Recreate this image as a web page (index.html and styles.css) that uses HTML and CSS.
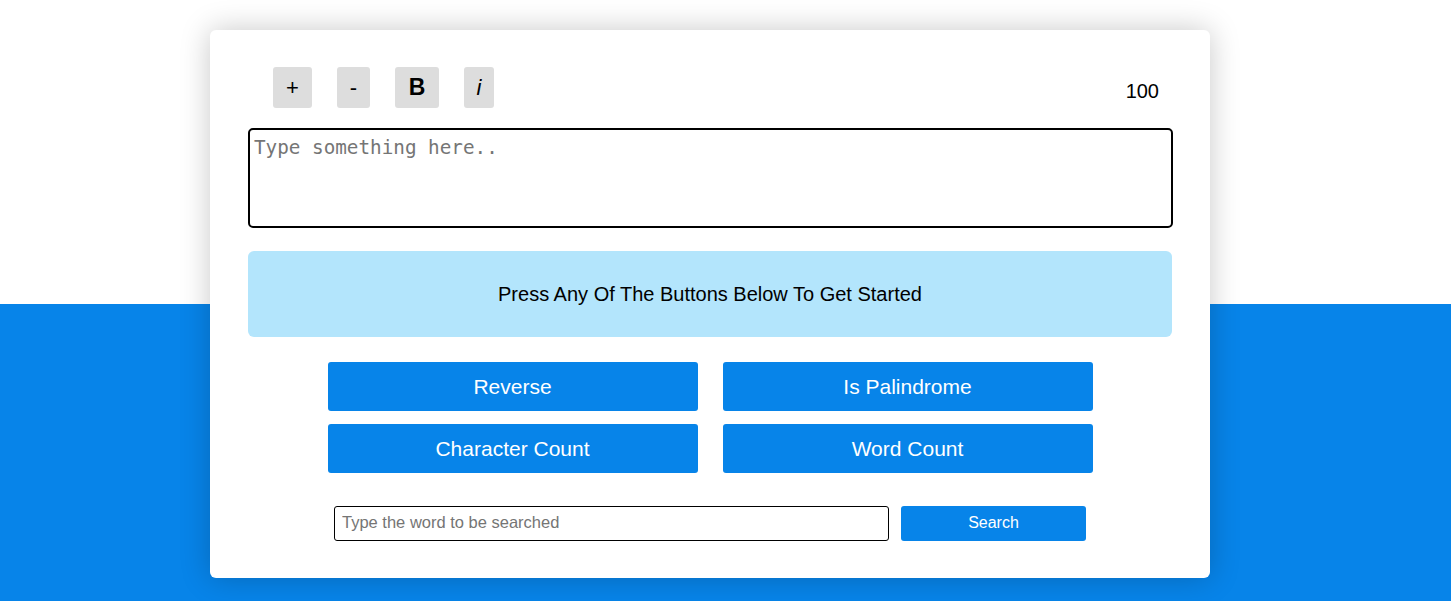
FILE: index.html
```html
<!DOCTYPE html>
<html>
<head>
<meta charset="utf-8">
<link rel="stylesheet" href="styles.css">
</head>
<body>
<div class="page">
  <div class="card">
    <div class="toolbar">
      <button class="tool tool-plus">+</button>
      <button class="tool tool-minus">-</button>
      <button class="tool tool-bold">B</button>
      <button class="tool tool-italic">i</button>
      <span class="size">100</span>
    </div>
    <textarea class="editor" placeholder="Type something here.."></textarea>
    <div class="info">Press Any Of The Buttons Below To Get Started</div>
    <div class="actions">
      <button class="action">Reverse</button>
      <button class="action">Is Palindrome</button>
      <button class="action">Character Count</button>
      <button class="action">Word Count</button>
    </div>
    <div class="search">
      <input class="search-input" type="text" placeholder="Type the word to be searched">
      <button class="search-btn">Search</button>
    </div>
  </div>
</div>
</body>
</html>
```

FILE: styles.css
```css
html, body {
  margin: 0;
  padding: 0;
}
body {
  height: 601px;
  overflow: hidden;
  background: linear-gradient(to bottom, #ffffff 0, #ffffff 304px, #0784e9 304px, #0784e9 100%);
  font-family: "Liberation Sans", Arial, sans-serif;
}
.page {
  padding-top: 30px;
}
.card {
  width: 1000px;
  box-sizing: border-box;
  margin-left: 210px;
  background: #fff;
  border-radius: 6px;
  padding: 37px 38px 37px 38px;
  box-shadow: 0 0 30px rgba(0, 0, 0, 0.22);
}
.toolbar {
  display: flex;
  align-items: center;
  height: 41px;
  padding-left: 25px;
  gap: 25px;
}
.tool {
  height: 41px;
  border: none;
  border-radius: 3px;
  background: #dddddd;
  color: #000;
  font-family: "Liberation Sans", Arial, sans-serif;
  font-size: 22px;
  padding: 0;
  cursor: pointer;
}
.tool-plus { width: 39px; }
.tool-minus { width: 33px; }
.tool-bold { width: 44px; font-weight: bold; font-size: 23px; }
.tool-italic { width: 30px; font-style: italic; }
.size {
  margin-left: auto;
  margin-right: 13px;
  font-size: 20px;
  padding-top: 7px;
  color: #000;
}
.editor {
  display: block;
  margin-top: 20px;
  width: 925px;
  height: 100px;
  box-sizing: border-box;
  border: 2px solid #000;
  border-radius: 5px;
  padding: 6px 4px;
  font-family: "DejaVu Sans Mono", "Liberation Mono", monospace;
  font-size: 19.3px;
  resize: none;
  outline: none;
}
.editor::placeholder {
  color: #757575;
}
.info {
  margin-top: 23px;
  height: 86px;
  background: #b3e5fc;
  border-radius: 6px;
  display: flex;
  align-items: center;
  justify-content: center;
  font-size: 20px;
  color: #000;
}
.actions {
  margin: 25px auto 0;
  width: 765px;
  display: grid;
  grid-template-columns: 370px 370px;
  column-gap: 25px;
  row-gap: 13px;
}
.action {
  height: 49px;
  border: none;
  border-radius: 3px;
  background: #0784e9;
  color: #fff;
  font-family: "Liberation Sans", Arial, sans-serif;
  font-size: 21px;
  padding: 0;
}
.search {
  margin-top: 33px;
  display: flex;
  justify-content: center;
  gap: 12px;
}
.search-input {
  width: 555px;
  height: 35px;
  box-sizing: border-box;
  border: 1px solid #000;
  border-radius: 3px;
  padding: 0 7px 2px;
  font-family: "Liberation Sans", Arial, sans-serif;
  font-size: 16.5px;
  outline: none;
}
.search-input::placeholder {
  color: #757575;
}
.search-btn {
  width: 185px;
  height: 35px;
  border: none;
  border-radius: 3px;
  background: #0784e9;
  color: #fff;
  font-family: "Liberation Sans", Arial, sans-serif;
  font-size: 16px;
  padding: 0 0 2px;
}
```
